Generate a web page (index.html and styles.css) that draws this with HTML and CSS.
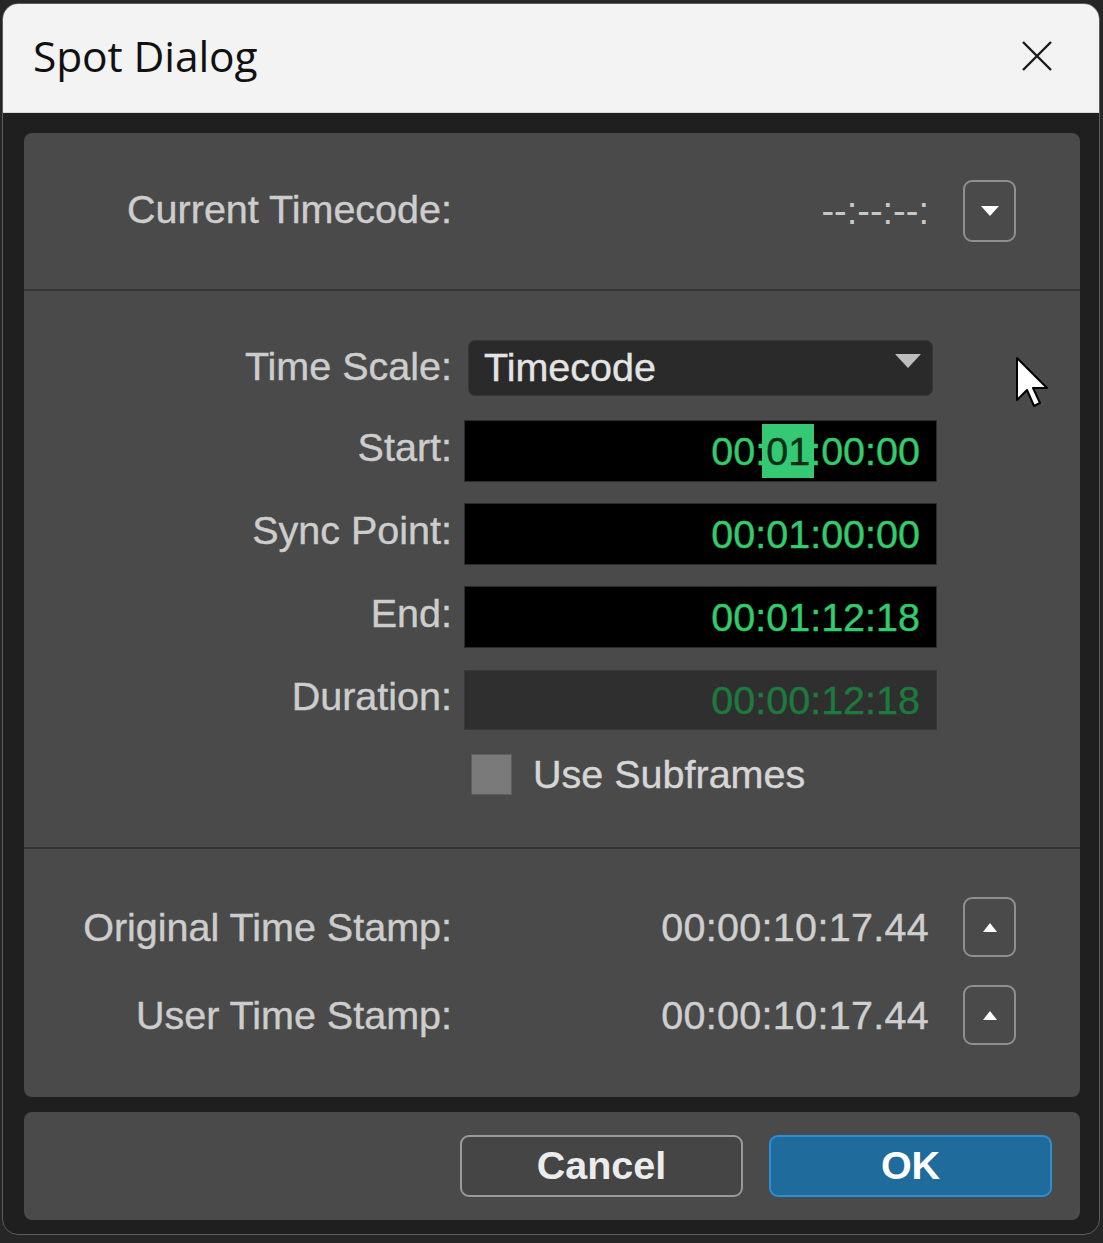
FILE: index.html
```html
<!DOCTYPE html>
<html>
<head>
<meta charset="utf-8">
<title>Spot Dialog</title>
<link rel="stylesheet" href="styles.css">
</head>
<body>
<div class="window">
  <div class="titlebar">
    <span class="title">Spot Dialog</span>
    <svg class="close" width="34" height="34" viewBox="0 0 34 34"><path d="M3 3 L31 31 M31 3 L3 31" stroke="#1a1a1a" stroke-width="2.4" fill="none"/></svg>
  </div>
  <div class="client">
    <div class="panel">
      <div class="section sec-current">
        <div class="row-stamp">
          <span class="label">Current Timecode:</span>
          <span class="value dashes">--:--:--:</span>
          <button class="icon-btn tall"><span class="tri-down"></span></button>
        </div>
      </div>
      <div class="section sec-times">
        <div class="field-row select-row">
          <span class="label">Time Scale:</span>
          <div class="select"><span>Timecode</span><span class="caret"></span></div>
        </div>
        <div class="field-row">
          <span class="label">Start:</span>
          <div class="tc">00:<span class="hl">01</span>:00:00</div>
        </div>
        <div class="field-row">
          <span class="label">Sync Point:</span>
          <div class="tc">00:01:00:00</div>
        </div>
        <div class="field-row">
          <span class="label">End:</span>
          <div class="tc">00:01:12:18</div>
        </div>
        <div class="field-row">
          <span class="label">Duration:</span>
          <div class="tc disabled">00:00:12:18</div>
        </div>
        <div class="field-row check-row">
          <span></span>
          <label class="check"><span class="box"></span><span class="check-text">Use Subframes</span></label>
        </div>
      </div>
      <div class="section sec-stamps">
        <div class="row-stamp">
          <span class="label">Original Time Stamp:</span>
          <span class="value">00:00:10:17.44</span>
          <button class="icon-btn"><span class="tri-up"></span></button>
        </div>
        <div class="row-stamp">
          <span class="label">User Time Stamp:</span>
          <span class="value">00:00:10:17.44</span>
          <button class="icon-btn"><span class="tri-up"></span></button>
        </div>
      </div>
    </div>
    <div class="footer">
      <button class="btn cancel">Cancel</button>
      <button class="btn ok">OK</button>
    </div>
  </div>
</div>
<svg class="cursor" width="40" height="58" viewBox="0 0 40 58"><path d="M2 2 L2 44 L12 34 L19 50 L25 47 L18 32 L32 32 Z" fill="#ffffff" stroke="#000000" stroke-width="2" stroke-linejoin="round"/></svg>
</body>
</html>
```
FILE: styles.css
```css
html, body {
  margin: 0;
  padding: 0;
}
body {
  background: #262626;
  width: 1103px;
  height: 1243px;
  overflow: hidden;
  position: relative;
  font-family: "Liberation Sans", Arial, sans-serif;
}
.window {
  margin: 3px 3px 0 2px;
  width: 1096px;
  height: 1230px;
  border: 1px solid #5c5c5c;
  border-radius: 16px;
  overflow: hidden;
  background: #1f1f1f;
  display: flex;
  flex-direction: column;
}
.titlebar {
  height: 109px;
  flex: none;
  background: #f3f3f3;
  border-bottom: 1px solid #d8d8d8;
  box-sizing: border-box;
  display: flex;
  align-items: center;
  justify-content: space-between;
  padding: 0 45px 6px 30px;
}
.title {
  font-family: "Open Sans", "Noto Sans", sans-serif;
  font-size: 42.5px;
  color: #111;
  letter-spacing: -0.1px;
}
.close {
  display: block;
  margin-top: 2px;
}
.client {
  padding: 20px 19px 0 21px;
  display: flex;
  flex-direction: column;
}
.panel {
  background: #4a4a4a;
  border-radius: 8px;
  height: 964px;
  display: flex;
  flex-direction: column;
}
.section {
  border-bottom: 2px solid #353535;
}
.section:last-child {
  border-bottom: none;
}
.sec-current {
  height: 156px;
  display: flex;
  align-items: center;
}
.label {
  font-size: 39.5px;
  color: #cdcdcd;
  text-align: right;
  white-space: nowrap;
  -webkit-text-stroke: 0.4px #cdcdcd;
}
.row-stamp {
  width: 100%;
  display: grid;
  grid-template-columns: 428px 1fr 53px;
  column-gap: 34px;
  align-items: center;
  padding-right: 64px;
  box-sizing: border-box;
}
.row-stamp .label {
  margin-top: -3px;
}
.sec-stamps .row-stamp .label {
  margin-top: 0;
}
.value {
  font-size: 39.5px;
  color: #cfcfcf;
  text-align: right;
  letter-spacing: 0.3px;
  -webkit-text-stroke: 0.4px #cfcfcf;
}
.dashes {
  letter-spacing: 0;
  color: #c8c8c8;
  font-size: 38px;
  -webkit-text-stroke: 0;
}
.icon-btn {
  width: 53px;
  height: 60px;
  border: 2px solid #8f8f8f;
  border-radius: 9px;
  background: transparent;
  padding: 0;
  display: flex;
  align-items: center;
  justify-content: center;
}
.icon-btn.tall {
  height: 62px;
}
.tri-down {
  width: 0;
  height: 0;
  border-left: 9px solid transparent;
  border-right: 9px solid transparent;
  border-top: 10px solid #ffffff;
}
.tri-up {
  width: 0;
  height: 0;
  border-left: 7px solid transparent;
  border-right: 7px solid transparent;
  border-bottom: 9px solid #ffffff;
}
.sec-times {
  height: 558px;
  box-sizing: border-box;
  padding-top: 49px;
  display: flex;
  flex-direction: column;
  gap: 21px;
}
.field-row {
  display: grid;
  grid-template-columns: 428px 473px;
  column-gap: 12px;
  align-items: center;
  height: 62px;
}
.field-row .label {
  margin-top: -8px;
}
.select-row {
  height: 59px;
  align-items: start;
}
.select-row .label {
  margin-top: 4px;
}
.select {
  margin-left: 4px;
  width: 465px;
  height: 56px;
  box-sizing: border-box;
  background: #2a2a2a;
  border: 1px solid #383838;
  border-radius: 7px;
  display: flex;
  align-items: center;
  justify-content: space-between;
  padding: 0 11px 2px 15px;
  font-size: 39.5px;
  color: #e4e4e4;
  -webkit-text-stroke: 0.4px #e4e4e4;
}
.caret {
  width: 0;
  height: 0;
  border-left: 13px solid transparent;
  border-right: 13px solid transparent;
  border-top: 14px solid #bdbdbd;
  align-self: flex-start;
  margin-top: 13px;
}
.tc {
  height: 62px;
  background: #000;
  box-sizing: border-box;
  padding-right: 16px;
  display: flex;
  align-items: center;
  justify-content: flex-end;
  font-size: 39.5px;
  color: #31cc6c;
  border: 1px solid #2c2c2c;
  -webkit-text-stroke: 0.4px #31cc6c;
}
.tc.disabled {
  background: #2f2f2f;
  color: #1d7a3d;
  border-color: #383838;
  height: 60px;
  -webkit-text-stroke: 0.4px #1d7a3d;
}
.hl {
  display: inline-block;
  background: #35c974;
  color: #0b2d17;
  -webkit-text-stroke: 0.4px #0b2d17;
  line-height: 54px;
  padding: 0 4px;
  margin: 0 -4px;
}
.check-row {
  height: 45px;
}
.check {
  display: flex;
  align-items: center;
  margin-left: 7px;
}
.box {
  width: 41px;
  height: 41px;
  box-sizing: border-box;
  background: #7a7a7a;
  border: 1px solid #5e5e5e;
}
.check-text {
  margin-left: 21px;
  font-size: 39.5px;
  color: #d6d6d6;
  -webkit-text-stroke: 0.4px #d6d6d6;
}
.sec-stamps {
  flex: 1;
  display: flex;
  flex-direction: column;
  padding-top: 48px;
  gap: 28px;
}
.sec-stamps .row-stamp {
  height: 60px;
}
.footer {
  margin-top: 15px;
  height: 108px;
  background: #4a4a4a;
  border-radius: 8px;
  display: flex;
  align-items: center;
  justify-content: flex-end;
  gap: 26px;
  padding-right: 28px;
}
.btn {
  width: 283px;
  height: 62px;
  border-radius: 9px;
  font-family: "Liberation Sans", Arial, sans-serif;
  font-weight: bold;
  font-size: 39.5px;
  padding: 0 0 2px;
}
.cancel {
  background: #454545;
  border: 2px solid #9a9a9a;
  color: #ececec;
}
.ok {
  background: #1f6b9b;
  border: 2px solid #2d8fd3;
  color: #ffffff;
}
.cursor {
  position: absolute;
  left: 1015px;
  top: 356px;
}
```
